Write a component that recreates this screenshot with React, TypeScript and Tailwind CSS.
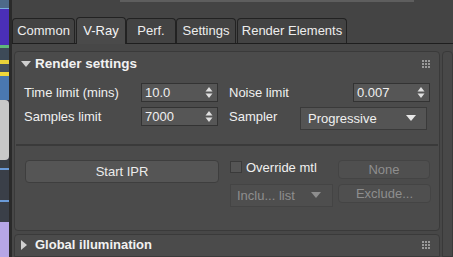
import React from 'react';

const font = { fontFamily: '"Liberation Sans", Arial, sans-serif' };

const Grip = () => (
  <svg width="9" height="9" viewBox="0 0 9 9" className="fill-[#9a9a9a]">
    {[0, 3, 6].map((y) =>
      [0, 3, 6].map((x) => <rect key={`${x}-${y}`} x={x} y={y} width="2" height="2" />)
    )}
  </svg>
);

const SpinArrows = () => (
  <svg width="8" height="13" viewBox="0 0 8 13" className="fill-[#e0e0e0]">
    <path d="M4 1 L7.5 5.5 L0.5 5.5 Z" />
    <path d="M4 12 L7.5 7.5 L0.5 7.5 Z" />
  </svg>
);

const Spinner = ({ value, w }: { value: string; w: string }) => (
  <div className={`${w} h-[19px] flex items-center justify-between pl-[3px] pr-[4px] bg-[#565656] border border-[#333] text-[#f0f0f0] text-[13px]`}>
    <span>{value}</span>
    <SpinArrows />
  </div>
);

const DownArrow = ({ color }: { color: string }) => (
  <svg width="10" height="7" viewBox="0 0 10 7" className={color}>
    <path d="M0 0 L10 0 L5 6 Z" />
  </svg>
);

const App = () => {
  return (
    <div className="w-[453px] h-[257px] flex bg-[#444] overflow-hidden select-none" style={font}>
      {/* viewport sliver */}
      <div className="w-[9px] h-full flex flex-col bg-[#3c3c48]">
        <div className="h-[9px] bg-[#4e6a8a] border-b border-[#7ad]" />
        <div className="h-[36px] bg-[#4a2fb8]" />
        <div className="h-[3px] bg-[#5fb87a]" />
        <div className="h-[12px] bg-[#3d4a58]" />
        <div className="h-[4px] bg-[#e8d23a]" />
        <div className="h-[8px] bg-[#45505c]" />
        <div className="h-[4px] bg-[#f0d83a]" />
        <div className="h-[24px] bg-[#4a78b0]" />
        <div className="h-[60px] bg-[#c8c8c8] rounded-r-[4px]" />
        <div className="h-[8px] bg-[#3a3f48]" />
        <div className="h-[2px] bg-[#6a9ad8]" />
        <div className="h-[30px] bg-[#3a3f48]" />
        <div className="h-[2px] bg-[#6a9ad8]" />
        <div className="h-[20px] bg-[#3a3f48]" />
        <div className="flex-1 bg-[#b6a6e6]" />
      </div>
      <div className="w-[3px] h-full bg-[#2a2a2a]" />

      {/* main */}
      <div className="flex-1 flex flex-col min-w-0">
        <div className="h-[3px] flex">
          <div className="ml-[108px] w-[294px] h-[2px] bg-[#5e5e5e]" />
        </div>

        {/* tabs */}
        <div className="mt-[14px] h-[27px] flex items-end border-b border-[#1e1e1e]">
          <div className="h-[25px] w-[63px] flex items-center justify-center bg-[#434343] border border-b-0 border-[#222] rounded-t-[4px] text-[13px] text-[#ededed]">Common</div>
          <div className="ml-[1px] h-[27px] w-[50px] flex items-center justify-center bg-[#4a4a4a] border border-b-0 border-[#222] rounded-t-[4px] text-[13px] text-[#f5f5f5] -mb-[1px]">V-Ray</div>
          <div className="h-[25px] w-[50px] flex items-center justify-center bg-[#434343] border border-b-0 border-[#222] rounded-t-[4px] text-[13px] text-[#ededed]">Perf.</div>
          <div className="h-[25px] w-[60px] flex items-center justify-center bg-[#434343] border border-b-0 border-[#222] rounded-t-[4px] text-[13px] text-[#ededed]">Settings</div>
          <div className="ml-[1px] h-[25px] w-[110px] flex items-center justify-center bg-[#434343] border border-b-0 border-[#222] rounded-t-[4px] text-[13px] text-[#ededed]">Render Elements</div>
        </div>

        {/* body */}
        <div className="flex-1 flex pt-[7px] pl-[2px] bg-[#474747]">
          <div className="flex-1 flex flex-col gap-[3px]">
            {/* Render settings rollout */}
            <div className="h-[180px] flex flex-col bg-[#4b4b4b] border border-[#3a3a3a] rounded-[4px]">
              <div className="h-[24px] flex items-center pl-[6px] pr-[8px]">
                <DownArrow color="fill-[#cfcfcf]" />
                <span className="ml-[4px] text-[13.5px] font-bold text-[#f2f2f2]">Render settings</span>
                <span className="ml-auto"><Grip /></span>
              </div>

              <div className="mt-[7px] flex items-center h-[19px] pl-[9px]">
                <span className="w-[117px] text-[13px] text-[#f0f0f0]">Time limit (mins)</span>
                <Spinner value="10.0" w="w-[77px]" />
                <span className="ml-[11px] w-[124px] text-[13px] text-[#f0f0f0]">Noise limit</span>
                <Spinner value="0.007" w="w-[77px]" />
              </div>
              <div className="mt-[5px] flex items-start h-[24px] pl-[9px]">
                <span className="w-[117px] text-[13px] text-[#f0f0f0]">Samples limit</span>
                <Spinner value="7000" w="w-[77px]" />
                <span className="ml-[11px] w-[71px] text-[13px] text-[#f0f0f0]">Sampler</span>
                <div className="w-[127px] h-[23px] flex items-center justify-between pl-[7px] pr-[10px] bg-[#545454] border border-[#3a3a3a] text-[13px] text-[#f0f0f0]">
                  <span>Progressive</span>
                  <DownArrow color="fill-[#e8e8e8]" />
                </div>
              </div>

              <div className="mt-[13px] mx-[1px] h-[2px] bg-[#3a3a3a]" />

              <div className="mt-[14px] flex pl-[10px]">
                <div className="w-[194px] h-[23px] flex items-center justify-center bg-[#555] border border-[#3e3e3e] rounded-[4px] text-[13px] text-[#ececec]">Start IPR</div>
                <div className="ml-[11px] flex flex-col gap-[5px]">
                  <div className="flex items-start h-[19px]">
                    <div className="mt-[1px] w-[12px] h-[12px] bg-[#555] border border-[#3a3a3a]" />
                    <span className="ml-[4px] w-[92px] text-[13px] text-[#f0f0f0] leading-[15px]">Override mtl</span>
                    <div className="w-[92px] h-[19px] flex items-center justify-center bg-[#4f4f4f] border border-[#444] rounded-[4px] text-[13px] text-[#8e8e8e]">None</div>
                  </div>
                  <div className="flex items-start">
                    <div className="w-[103px] h-[23px] flex items-center justify-between pl-[6px] pr-[11px] bg-[#4e4e4e] border border-[#444] text-[13px] text-[#8e8e8e]">
                      <span>Inclu... list</span>
                      <DownArrow color="fill-[#8e8e8e]" />
                    </div>
                    <div className="ml-[5px] w-[93px] h-[19px] flex items-center justify-center bg-[#4f4f4f] border border-[#444] rounded-[4px] text-[13px] text-[#8e8e8e]">Exclude...</div>
                  </div>
                </div>
              </div>
            </div>

            {/* Global illumination rollout */}
            <div className="flex-1 flex items-center pb-[1px] pl-[6px] pr-[8px] bg-[#4b4b4b] border border-[#3a3a3a] rounded-t-[4px]">
              <svg width="7" height="10" viewBox="0 0 7 10" className="fill-[#cfcfcf]">
                <path d="M0 0 L6 5 L0 10 Z" />
              </svg>
              <span className="ml-[7px] text-[13px] font-bold text-[#f2f2f2]">Global illumination</span>
              <span className="ml-auto"><Grip /></span>
            </div>
          </div>

          {/* scrollbar */}
          <div className="ml-[2px] w-[11px] flex flex-col">
            <div className="flex-1 bg-[#484848] border border-[#393939] rounded-t-[4px]" />
          </div>
        </div>
      </div>
    </div>
  );
};

export default App;
